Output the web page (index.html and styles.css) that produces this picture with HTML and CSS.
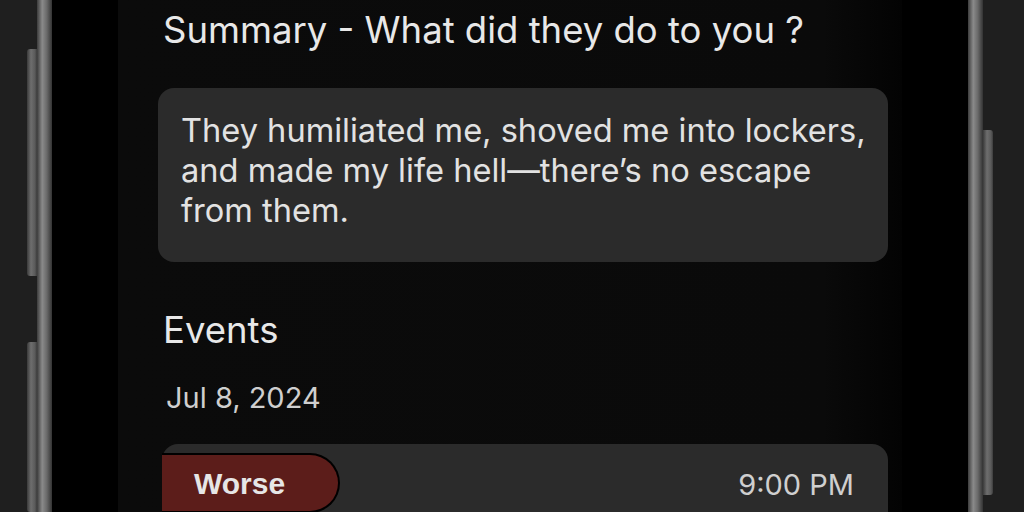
FILE: index.html
```html
<!DOCTYPE html>
<html lang="en">
<head>
    <meta charset="UTF-8">
    <meta name="viewport" content="width=device-width, initial-scale=1.0">
    <title>Bully Journal</title>
    <link rel="stylesheet" href="styles.css">
</head>
<body>

<div class="stage">
    <!-- Left side buttons -->
    <div class="rail rail-left">
        <div class="side-btn btn-top"></div>
        <div class="side-btn btn-low"></div>
    </div>

    <div class="edge"></div>
    <div class="bezel">
        <div class="screen">
            <h2 class="section-title">Summary - What did they do to you ?</h2>
            <div class="summary-box">
                They humiliated me, shoved me into lockers, and made my life hell—there’s no escape from them.
            </div>

            <h2 class="section-title events-title">Events</h2>
            <div class="event-date">Jul 8, 2024</div>

            <div class="event-card">
                <span class="badge">Worse</span>
                <span class="event-time">9:00 PM</span>
            </div>
        </div>
    </div>
    <div class="edge"></div>

    <!-- Right side button -->
    <div class="rail rail-right">
        <div class="side-btn btn-power"></div>
    </div>
</div>

</body>
</html>
```

FILE: styles.css
```css
body {
    margin: 0;
    background-color: #1f1f1f;
    font-family: Inter, "Noto Sans", sans-serif;
    overflow: hidden;
}
.stage {
    display: flex;
    height: 512px;
    padding-left: 27px;
}
.rail {
    width: 10px;
    display: flex;
    flex-direction: column;
}
.side-btn {
    background: linear-gradient(90deg, #3a3a3a, #6e6e6e 40%, #5a5a5a 80%, #3c3c3c);
}
.rail-left .side-btn {
    border-radius: 3px 0 0 3px;
}
.rail-right .side-btn {
    border-radius: 0 3px 3px 0;
}
.btn-top {
    margin-top: 49px;
    height: 227px;
}
.btn-low {
    margin-top: 66px;
    flex: 1;
}
.btn-power {
    margin-top: 130px;
    height: 365px;
}
.edge {
    width: 15px;
    background: linear-gradient(90deg, #3c3c3c, #8a8a8a 35%, #6a6a6a 65%, #333);
}
.bezel {
    background-color: #000;
    padding: 0 66px;
}
.screen {
    width: 784px;
    height: 512px;
    background: linear-gradient(90deg, #0b0b0b, #0a0a0a 90%, #030303);
    padding: 0 14px 0 40px;
    box-sizing: border-box;
    color: #e6e6e6;
}
.section-title {
    font-weight: 400;
    font-size: 36.5px;
    margin: 0;
    padding: 10px 0 0 5px;
    line-height: 40px;
    color: #e8e8e8;
}
.summary-box {
    margin-top: 38px;
    background-color: #2b2b2b;
    border-radius: 16px;
    padding: 22px 16px 32px 23px;
    font-size: 32.6px;
    line-height: 40px;
    color: #e2e2e2;
}
.events-title {
    padding-top: 48px;
}
.event-date {
    font-size: 29px;
    color: #cfcfcf;
    padding: 32px 0 0 8px;
    line-height: 32px;
}
.event-card {
    margin: 30px 0 0 4px;
    background-color: #2b2b2b;
    border-radius: 16px 16px 0 0;
    height: 80px;
    padding-top: 9px;
    box-sizing: border-box;
    display: flex;
    align-items: flex-start;
    justify-content: space-between;
}
.badge {
    background-color: #5c1d1a;
    border: 2px solid #000;
    border-left: none;
    border-radius: 0 30px 30px 0;
    width: 178px;
    height: 60px;
    box-sizing: border-box;
    padding: 12px 0 0 32px;
    font-family: "Liberation Sans", Arial, sans-serif;
    font-weight: 700;
    font-size: 30px;
    color: #e6e6e6;
}
.event-time {
    font-size: 29px;
    color: #cfcfcf;
    padding: 14px 34px 0 0;
}
```
